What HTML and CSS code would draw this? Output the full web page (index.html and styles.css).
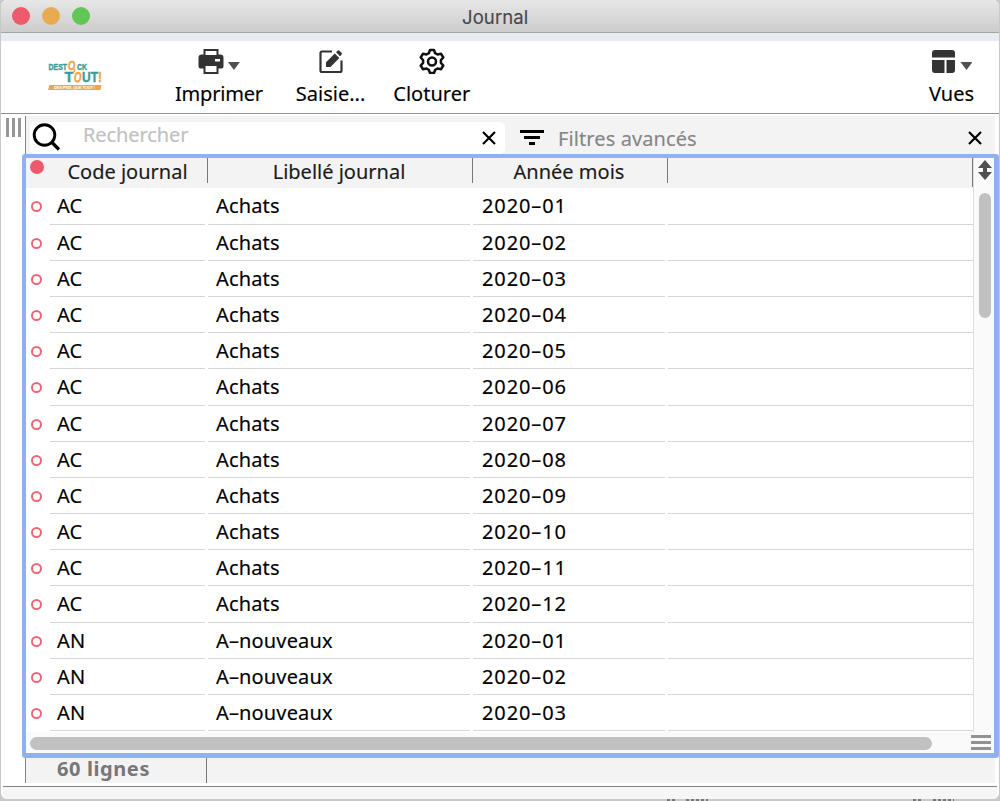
FILE: index.html
```html
<!DOCTYPE html>
<html lang="fr">
<head>
  <meta charset="UTF-8" />
  <title>Journal</title>
  <link rel="stylesheet" href="styles.css">
</head>
<body>
  <div class="window">
    <header class="titlebar">
      <span class="light red"></span>
      <span class="light orange"></span>
      <span class="light green"></span>
      <h1>Journal</h1>
    </header>

    <nav class="toolbar">
      <svg class="logo" width="56" height="34" viewBox="0 0 56 34">
        <g class="logo-text">
          <text x="0.500" y="12.800" font-size="8.800" textLength="18.500" lengthAdjust="spacingAndGlyphs" fill="#3a9b9b" stroke="#3a9b9b">DEST</text>
          <text x="20" y="13" font-size="13" textLength="7.500" lengthAdjust="spacingAndGlyphs" fill="#e9a64c" stroke="#e9a64c" transform="rotate(10 24 9)">O</text>
          <text x="29" y="12.800" font-size="8.800" textLength="10" lengthAdjust="spacingAndGlyphs" fill="#3a9b9b" stroke="#3a9b9b">CK</text>
          <text x="16.500" y="25.300" font-size="14.600" textLength="9" lengthAdjust="spacingAndGlyphs" fill="#3a9b9b" stroke="#3a9b9b">T</text>
          <text x="26" y="25.300" font-size="14.600" textLength="7.500" lengthAdjust="spacingAndGlyphs" fill="#e9a64c" stroke="#e9a64c" transform="rotate(10 30 20)">O</text>
          <text x="34" y="25.300" font-size="14.600" textLength="16" lengthAdjust="spacingAndGlyphs" fill="#3a9b9b" stroke="#3a9b9b">UT</text>
          <text x="50" y="25.300" font-size="14.600" textLength="4" lengthAdjust="spacingAndGlyphs" fill="#e9a64c" stroke="#e9a64c">!</text>
        </g>
        <path d="M27 12l-2 5" stroke="#e9a64c" stroke-width="1.500" />
        <path d="M1.500 28h52l-1 5H0z" fill="#e9a64c" />
        <text x="6" y="32" font-family="Liberation Sans" font-size="4" font-weight="bold" textLength="41" fill="#fff">DES PRIX, QUE TOUT !</text>
      </svg>

      <div class="tool print">
        <div class="icons">
          <svg width="26" height="26" viewBox="0 0 26 26">
            <path fill="#333" d="M5.500 1h15v5.500h1.700a3.300 3.300 0 0 1 3.300 3.300V18.500a2 2 0 0 1-2 2h-3V26h-15v-5.500h-3a2 2 0 0 1-2-2V9.800a3.300 3.300 0 0 1 3.300-3.300h1.700z" />
            <path fill="#fff" d="M7.500 3h11v4h-11zM7.500 18h11v6h-11zM17 11h5v2.500h-5z" />
          </svg>
          <span class="caret"></span>
        </div>
        <span class="label">Imprimer</span>
      </div>

      <div class="tool entry">
        <div class="icons">
          <svg width="26" height="26" viewBox="0 0 26 26">
            <path fill="none" stroke="#333" stroke-width="2.200" d="M14 3.500H4Q2.500 3.500 2.500 5v17.500Q2.500 24 4 24h18q1.500 0 1.500-1.500V12.500" />
            <path fill="#333" d="M8 19v-4.700L16.800 5.500l4.500 4.500-8.800 9zM18 4.200l1.500-1.500q1-1 2 0l2 2q1 1 0 2L22 8.200z" />
          </svg>
        </div>
        <span class="label">Saisie...</span>
      </div>

      <div class="tool close-period">
        <div class="icons">
          <svg width="26" height="26" viewBox="0 0 26 26" fill="none" stroke="#111" stroke-width="2.500" stroke-linejoin="round">
            <path d="M11 2h4l1.200 3.200 2.300 1.300 3.600-.7 2.200 3.700-2.400 2.700v2.600l2.400 2.700-2.200 3.700-3.600-.7-2.300 1.300L15 25h-4l-1.200-3.200-2.300-1.300-3.600.7-2.200-3.700 2.400-2.700v-2.600L1.700 9.500l2.200-3.700 3.600.7 2.300-1.300z" />
            <circle cx="13" cy="13.500" r="4" />
          </svg>
        </div>
        <span class="label">Cloturer</span>
      </div>

      <div class="tool views">
        <div class="icons">
          <svg width="26" height="26" viewBox="0 0 26 26">
            <path fill="#333" d="M5 2h17a3 3 0 0 1 3 3v4.500H2V5a3 3 0 0 1 3-3zM2 12h12.500v13H5a3 3 0 0 1-3-3zM16.500 12H25v10a3 3 0 0 1-3 3h-5.500z" />
          </svg>
          <span class="caret"></span>
        </div>
        <span class="label">Vues</span>
      </div>
    </nav>

    <main class="content">
      <div class="gutter">
        <div class="grip"></div>
      </div>
      <section class="panel">
        <div class="filters">
          <div class="search">
            <svg class="loupe" width="30" height="30" viewBox="0 0 30 30" fill="none" stroke="#000">
              <circle cx="12.500" cy="12" r="10.300" stroke-width="2.900" />
              <path d="M19.500 19l7.500 7.500" stroke-width="3.200" />
            </svg>
            <span class="placeholder">Rechercher</span>
            <svg class="cross" width="14" height="14" viewBox="0 0 14 14"><path d="M1 1l12 12M13 1L1 13" /></svg>
          </div>
          <svg class="funnel" width="24" height="15" viewBox="0 0 24 15"><path d="M0 0h24v3H0zM4 6h16v3H4zM9 12h6v3H9z" /></svg>
          <span class="advanced">Filtres avancés</span>
          <svg class="cross" width="14" height="14" viewBox="0 0 14 14"><path d="M1 1l12 12M13 1L1 13" /></svg>
        </div>

        <div class="table">
          <div class="grid">
            <div class="head">
              <i class="dot"></i>
              <span class="th">Code journal</span>
              <span class="th">Libellé journal</span>
              <span class="th">Année mois</span>
              <span class="th"></span>
            </div>
            <div class="row"><i></i><span>AC</span><span>Achats</span><span class="date">2020–01</span><span></span></div>
            <div class="row"><i></i><span>AC</span><span>Achats</span><span class="date">2020–02</span><span></span></div>
            <div class="row"><i></i><span>AC</span><span>Achats</span><span class="date">2020–03</span><span></span></div>
            <div class="row"><i></i><span>AC</span><span>Achats</span><span class="date">2020–04</span><span></span></div>
            <div class="row"><i></i><span>AC</span><span>Achats</span><span class="date">2020–05</span><span></span></div>
            <div class="row"><i></i><span>AC</span><span>Achats</span><span class="date">2020–06</span><span></span></div>
            <div class="row"><i></i><span>AC</span><span>Achats</span><span class="date">2020–07</span><span></span></div>
            <div class="row"><i></i><span>AC</span><span>Achats</span><span class="date">2020–08</span><span></span></div>
            <div class="row"><i></i><span>AC</span><span>Achats</span><span class="date">2020–09</span><span></span></div>
            <div class="row"><i></i><span>AC</span><span>Achats</span><span class="date">2020–10</span><span></span></div>
            <div class="row"><i></i><span>AC</span><span>Achats</span><span class="date">2020–11</span><span></span></div>
            <div class="row"><i></i><span>AC</span><span>Achats</span><span class="date">2020–12</span><span></span></div>
            <div class="row"><i></i><span>AN</span><span>A–nouveaux</span><span class="date">2020–01</span><span></span></div>
            <div class="row"><i></i><span>AN</span><span>A–nouveaux</span><span class="date">2020–02</span><span></span></div>
            <div class="row"><i></i><span>AN</span><span>A–nouveaux</span><span class="date">2020–03</span><span></span></div>
          </div>
          <div class="side">
            <svg class="sort" width="14" height="20" viewBox="0 0 14 20"><path fill="#505050" d="M7 0l7 8H9v4h5L7 20l-7-8h5V8H0z" /></svg>
            <div class="thumb"></div>
          </div>
          <div class="bottom">
            <div class="thumb"></div>
            <div class="lines"></div>
          </div>
        </div>

        <footer class="summary"><span>60 lignes</span></footer>
      </section>
    </main>
    <div class="statusbar"></div>
  </div>
  <svg class="under" width="1000" height="2" viewBox="0 0 1000 2"><path stroke="#777" stroke-width="2" stroke-dasharray="3 2" d="M667 1h9M686 1h22M913 1h9M933 1h21" /></svg>
</body>
</html>
```
FILE: styles.css
```css
* {
  box-sizing: border-box;
}
body {
  margin: 0;
  width: 1000px;
  height: 801px;
  overflow: hidden;
  background: #c9c9c9;
  font-family: "Noto Sans", "Open Sans", sans-serif;
  font-size: 20px;
  color: #000;
  -webkit-text-stroke: 0.15px;
}
.window {
  display: flex;
  flex-direction: column;
  width: 998px;
  height: 799px;
  margin-left: 1px;
  border-radius: 6px;
  background: #fff;
  overflow: hidden;
}
.titlebar {
  display: flex;
  align-items: center;
  flex: none;
  height: 33px;
  padding-left: 11px;
  gap: 12px;
  background: linear-gradient(#e7e7e7, #cdcdcd);
  border-bottom: 1px solid #a4a4a4;
}
.light {
  width: 18px;
  height: 18px;
  border-radius: 50%;
}
.red {
  background: #ec5a6b;
}
.orange {
  background: #e9ab52;
}
.green {
  background: #62c656;
}
h1 {
  margin: 2px 0 0 360px;
  font-family: Inter, sans-serif;
  font-size: 18.5px;
  font-weight: 400;
  letter-spacing: 0.1px;
  color: #484848;
}
.toolbar {
  display: flex;
  flex: none;
  height: 81px;
  padding-right: 25px;
  border-top: 8px solid #e8ebf1;
  border-bottom: 1px solid #929292;
}
.logo {
  margin: 16px 0 0 47px;
  -webkit-text-stroke: 0;
}
.logo-text {
  font-family: "Liberation Sans", sans-serif;
  font-weight: bold;
  stroke-width: 0.4;
}
.tool {
  display: flex;
  flex-direction: column;
  align-items: center;
  padding-top: 7px;
}
.print {
  margin-left: 71px;
}
.entry {
  margin-left: 33px;
}
.close-period {
  margin-left: 28px;
}
.views {
  margin-left: auto;
}
.icons {
  display: flex;
  height: 28px;
  gap: 4px;
}
.caret {
  margin-top: 14px;
  width: 12px;
  height: 8px;
  background: #505050;
  clip-path: polygon(0 0, 100% 0, 50% 100%);
}
.label {
  margin-top: 5px;
  line-height: 26px;
}
.print .label {
  letter-spacing: -0.2px;
}
.content {
  display: flex;
  flex: none;
  height: 669px;
  padding-top: 2px;
}
.gutter {
  flex: none;
  width: 24px;
  padding: 2px 0 0 5px;
}
.grip {
  width: 15px;
  height: 19px;
  background: repeating-linear-gradient(90deg, #979797 0 3px, #fff 3px 6px);
}
.panel {
  width: 970px;
  border-left: 1px solid #858585;
  background: #f3f3f3;
}
.filters {
  display: flex;
  align-items: center;
  height: 38px;
  padding-right: 13px;
}
.search {
  display: flex;
  align-items: center;
  width: 475px;
  height: 32px;
  margin: 5px 15px 0 4px;
  padding: 0 9px 0 2px;
  border-radius: 5px;
  background: #fff;
}
.placeholder {
  margin: -6px auto 0 21px;
  color: #c1c1c1;
  letter-spacing: -0.1px;
}
.cross {
  fill: none;
  stroke: #000;
  stroke-width: 2.2;
}
.search .cross {
  margin-top: 1px;
}
.funnel {
  margin-top: 5px;
}
.advanced {
  margin: 6px auto 0 14px;
  color: #868686;
  letter-spacing: 0.1px;
}
.filters > .cross {
  margin-top: 5px;
}
.table {
  display: grid;
  grid-template-columns: 948px 20px;
  grid-template-rows: 574px 21px;
  width: 977px;
  height: 604px;
  margin-left: -4px;
  border: 5px solid #8fb0f1;
  border-left-width: 4px;
  border-top-width: 4px;
  border-radius: 3px;
  background: #fafafa;
}
.grid {
  background: #fff;
  border-right: 1px solid #ddd;
  overflow: hidden;
}
.head,
.row {
  display: grid;
  grid-template-columns: 21px 155px 262px 192px 305px;
  column-gap: 3px;
}
.head {
  height: 30.4px;
  background: #f3f3f3;
}
.dot {
  width: 14px;
  height: 14px;
  margin: 2px 0 0 4px;
  border-radius: 50%;
  background: #ec5a6b;
}
.th {
  height: 25px;
  padding-right: 2px;
  line-height: 28px;
  border-right: 1px solid #777;
  text-align: center;
  white-space: nowrap;
  color: #1a1a1a;
  margin-right: -3px;
}
.th:last-child {
  height: 29px;
  margin-right: 0;
}
.row {
  height: 36.2px;
}
.row i {
  width: 11px;
  height: 11px;
  margin: 13px 0 0 5px;
  border: 2px solid #ec6878;
  border-radius: 50%;
}
.row span {
  padding-left: 7px;
  border-bottom: 1px solid #d6d6d6;
  line-height: 36px;
  height: 36.2px;
  letter-spacing: 0.15px;
}
.row span + span {
  padding-left: 8px;
}
.row .date {
  padding-left: 9px;
  letter-spacing: 0.9px;
}
.side {
  padding: 2px 0 0 4px;
}
.side svg {
  display: block;
}
.side .thumb {
  width: 12px;
  height: 125px;
  margin: 13px 0 0 1px;
}
.thumb {
  border-radius: 7px;
  background: #c1c1c1;
}
.bottom {
  grid-column: 1 / 3;
  display: flex;
  justify-content: space-between;
  padding: 5px 3px 0 4px;
}
.bottom .thumb {
  width: 902px;
  height: 13px;
}
.lines {
  width: 20px;
  height: 15px;
  margin-top: -2px;
  background: repeating-linear-gradient(#929292 0 3px, #fafafa 3px 6px);
}
.summary {
  height: 25px;
  padding-left: 31px;
  line-height: 22px;
  font-weight: 700;
  font-size: 20px;
  letter-spacing: 0.6px;
  color: #777;
  -webkit-text-stroke: 0;
}
.summary span {
  display: block;
  width: 150px;
  height: 25px;
  border-right: 1px solid #777;
}
.statusbar {
  flex: none;
  height: 16px;
  margin: 3px 2px 0;
  border-top: 1px solid #858585;
  background: #f6f6f6;
}
.under {
  display: block;
}
```
